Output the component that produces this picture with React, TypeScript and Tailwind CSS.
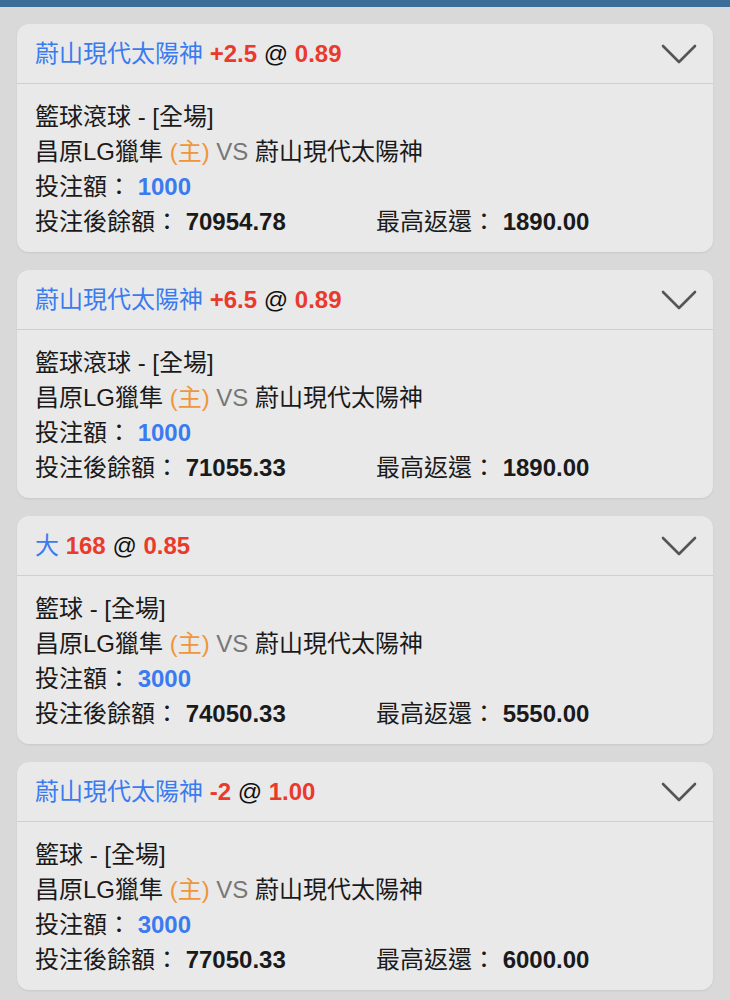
import React from 'react';

type Bet = {
  team: string;
  line: string;
  odds: string;
  sport: string;
  stake: string;
  balance: string;
  maxReturn: string;
};

const bets: Bet[] = [
  { team: '蔚山現代太陽神', line: '+2.5', odds: '0.89', sport: '籃球滾球 - [全場]', stake: '1000', balance: '70954.78', maxReturn: '1890.00' },
  { team: '蔚山現代太陽神', line: '+6.5', odds: '0.89', sport: '籃球滾球 - [全場]', stake: '1000', balance: '71055.33', maxReturn: '1890.00' },
  { team: '大', line: '168', odds: '0.85', sport: '籃球 - [全場]', stake: '3000', balance: '74050.33', maxReturn: '5550.00' },
  { team: '蔚山現代太陽神', line: '-2', odds: '1.00', sport: '籃球 - [全場]', stake: '3000', balance: '77050.33', maxReturn: '6000.00' },
];

function Chevron() {
  return (
    <svg width="36" height="22" viewBox="0 0 36 22" fill="none" className="text-[#555]">
      <path d="M2 3 L18 19 L34 3" stroke="currentColor" strokeWidth="2.6" strokeLinecap="round" strokeLinejoin="round" />
    </svg>
  );
}

function BetCard({ bet }: { bet: Bet }) {
  return (
    <div className="bg-[#e9e9e9] rounded-[12px] shadow-[0_1px_2px_rgba(0,0,0,0.08)]">
      <div className="h-[60px] flex items-center justify-between pl-[18px] pr-[16px] border-b border-[#cfcfcf]">
        <div className="text-[24px] leading-none">
          <span className="text-[#3a7bf0]">{bet.team}</span>{' '}
          <span className="text-[#ea3a2b] font-bold">{bet.line}</span>{' '}
          <span className="text-[#111]">@</span>{' '}
          <span className="text-[#ea3a2b] font-bold">{bet.odds}</span>
        </div>
        <Chevron />
      </div>
      <div className="pl-[18px] pt-[15px] pb-[13px] text-[24px] leading-[35px] text-[#1a1a1a]">
        <div>{bet.sport}</div>
        <div>
          昌原LG獵隼 <span className="text-[#f0953a]">(主)</span> <span className="text-[#777]">VS</span> 蔚山現代太陽神
        </div>
        <div>
          投注額： <span className="text-[#3a7bf0] font-bold">{bet.stake}</span>
        </div>
        <div className="flex">
          <div className="w-[341px]">
            投注後餘額： <span className="font-bold">{bet.balance}</span>
          </div>
          <div>
            最高返還： <span className="font-bold">{bet.maxReturn}</span>
          </div>
        </div>
      </div>
    </div>
  );
}

export default function App() {
  return (
    <div
      className="w-[730px] h-[1000px] bg-[#d9d9d9] overflow-hidden"
      style={{ fontFamily: '"Liberation Sans", "Noto Sans CJK TC", sans-serif' }}
    >
      <div className="h-[7px] bg-[#3c6e98]" />
      <div className="px-[17px] pt-[17px] flex flex-col gap-[18px]">
        {bets.map((bet, i) => (
          <BetCard key={i} bet={bet} />
        ))}
      </div>
    </div>
  );
}
